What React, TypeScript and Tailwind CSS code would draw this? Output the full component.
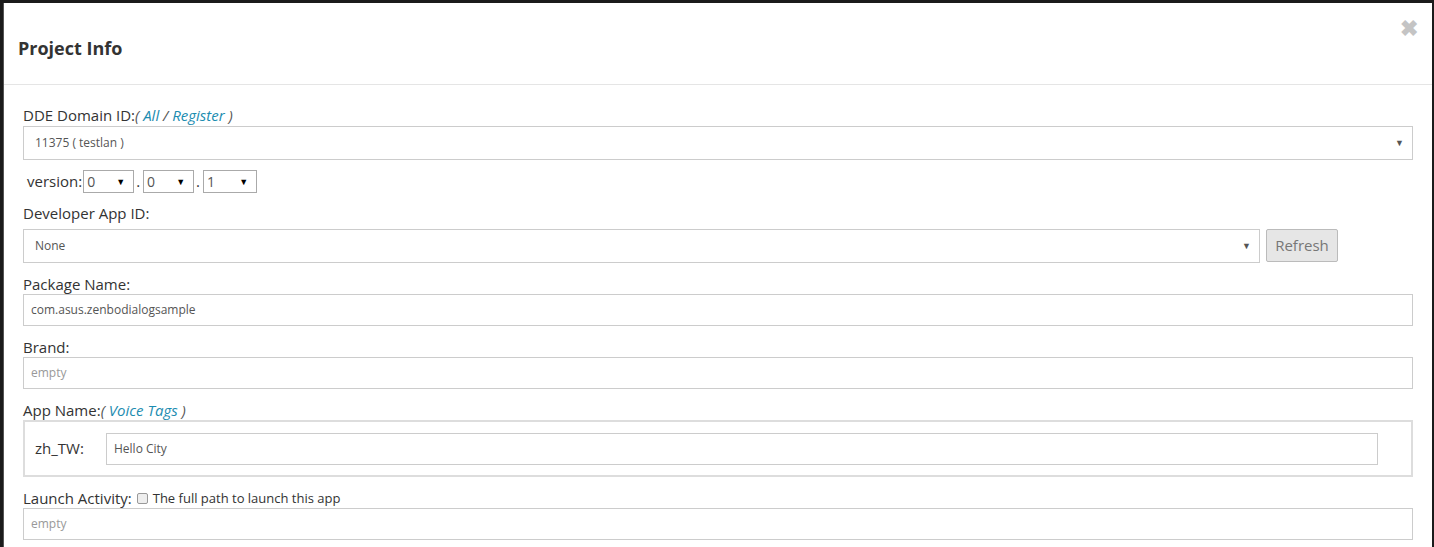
import React from "react";

const font = { fontFamily: '"Open Sans", "Liberation Sans", sans-serif' };

function SelectBox({ value, className }: { value: string; className?: string }) {
  return (
    <div
      className={`flex items-center justify-between border border-[#cccccc] bg-white pl-[11px] pr-[8px] text-[12px] text-[#555555] ${className ?? ""}`}
    >
      <span>{value}</span>
      <span className="text-[9px] text-[#555555]">▼</span>
    </div>
  );
}

function TextBox({ value, placeholder, className }: { value?: string; placeholder?: string; className?: string }) {
  return (
    <div
      className={`flex h-[32px] items-center border border-[#cccccc] bg-white pl-[7px] text-[12px] ${value ? "text-[#555555]" : "text-[#999999]"} ${className ?? ""}`}
    >
      {value ?? placeholder}
    </div>
  );
}

function Label({ children, className }: { children: React.ReactNode; className?: string }) {
  return <div className={`h-[20px] text-[15px] leading-[20px] text-[#333333] ${className ?? ""}`}>{children}</div>;
}

function VersionSelect({ value, w }: { value: string; w: string }) {
  return (
    <div className={`flex h-[23px] ${w} items-center justify-between border border-[#aaaaaa] bg-white pl-[3px] pr-[8px] text-[14px] text-[#555555]`}>
      <span>{value}</span>
      <span className="text-[9px] text-black">▼</span>
    </div>
  );
}

export default function App() {
  return (
    <div className="h-[547px] w-[1434px] overflow-hidden bg-[#1b1b1b] pl-[3px] pr-[2px] pt-[3px]" style={font}>
      <div className="h-[544px] w-full border-l border-[#555555] bg-white">
        {/* header */}
        <div className="relative flex h-[82px] items-center border-b border-[#e5e5e5] pl-[14px] pt-[10px]">
          <h4 className="text-[18px] font-bold text-[#333333]">Project Info</h4>
          <span className="absolute right-[14px] top-[13px] text-[22px] font-bold leading-none text-[#c4c4c4]">✖</span>
        </div>

        {/* body */}
        <div className="px-[19px] pt-[20px]">
          <Label>
            DDE Domain ID:
            <span className="italic text-[#555555]">
              ( <span className="text-[#1c8cb0]">All</span> / <span className="text-[#1c8cb0]">Register</span> )
            </span>
          </Label>
          <SelectBox value="11375 ( testlan )" className="mt-[1px] h-[34px] w-[1390px]" />

          <div className="mt-[10px] flex h-[23px] items-center pl-[4px] text-[15px] text-[#333333]">
            <span className="mr-[1px]">version:</span>
            <VersionSelect value="0" w="w-[51px]" />
            <span className="ml-[2px] mr-[3px]">.</span>
            <VersionSelect value="0" w="w-[51px]" />
            <span className="ml-[2px] mr-[3px]">.</span>
            <VersionSelect value="1" w="w-[54px]" />
          </div>

          <Label className="mt-[10px]">Developer App ID:</Label>
          <div className="mt-[6px] flex items-start gap-[6px]">
            <SelectBox value="None" className="h-[34px] w-[1237px]" />
            <button className="h-[33px] w-[72px] rounded-[2px] border border-[#bbbbbb] bg-[#e6e6e6] text-[15px] text-[#777777]">
              Refresh
            </button>
          </div>

          <Label className="mt-[11px]">Package Name:</Label>
          <TextBox value="com.asus.zenbodialogsample" className="w-[1390px]" />

          <Label className="mt-[11px]">Brand:</Label>
          <TextBox placeholder="empty" className="w-[1390px]" />

          <Label className="mt-[11px]">
            App Name:
            <span className="italic text-[#555555]">
              ( <span className="text-[#1c8cb0]">Voice Tags</span> )
            </span>
          </Label>
          <div className="flex h-[57px] w-[1390px] items-center border-2 border-[#dddddd] pl-[10px]">
            <span className="w-[71px] text-[15px] text-[#333333]">zh_TW:</span>
            <TextBox value="Hello City" className="w-[1272px]" />
          </div>

          <Label className="mt-[11px] flex items-center">
            Launch Activity:
            <span className="ml-[5px] mr-[5px] inline-block h-[11px] w-[11px] rounded-[2px] border border-[#999999] bg-[#eeeeee]" />
            <span className="text-[13px]">The full path to launch this app</span>
          </Label>
          <TextBox placeholder="empty" className="w-[1390px]" />
        </div>
      </div>
    </div>
  );
}
